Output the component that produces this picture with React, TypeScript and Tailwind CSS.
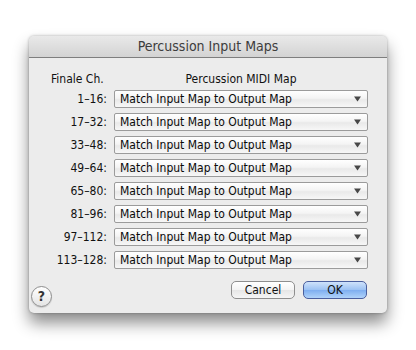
import React from 'react';

const ranges = ['1–16:', '17–32:', '33–48:', '49–64:', '65–80:', '81–96:', '97–112:', '113–128:'];

function PopUp() {
  return (
    <div className="relative flex h-[18px] items-center rounded-[2px] border border-[#9b9b9b] bg-[linear-gradient(#ffffff,#f4f4f4_45%,#e9e9e9_55%,#f7f7f7)] pl-[5px] text-[12px] text-[#0a0a0a]">
      <span>Match Input Map to Output Map</span>
      <svg className="absolute right-[6px] top-[5px]" width="7" height="6" viewBox="0 0 7 6">
        <path d="M0 0.5 H7 L3.5 5.5 Z" fill="#474747" />
      </svg>
    </div>
  );
}

export default function App() {
  return (
    <div
      className="h-[350px] w-[416px] bg-white pl-[29px] pt-[36px]"
      style={{ fontFamily: '"Lucida Grande", "DejaVu Sans Condensed", "DejaVu Sans", sans-serif' }}
    >
      <div className="flex h-[277px] w-[358px] flex-col overflow-hidden rounded-[5px] bg-[#ececec] shadow-[0_10px_16px_rgba(0,0,0,0.45),0_0_3px_rgba(0,0,0,0.3)]">
        <div className="flex h-[22px] items-center justify-center border-b border-[#7e7e7e] bg-[linear-gradient(#e9e9e9,#d3d3d3)] text-[14px] text-[#3d3d3d]">
          Percussion Input Maps
        </div>

        <div className="flex flex-1 flex-col pt-[12px]">
          <div className="grid grid-cols-[85px_254px] items-center text-[12px] text-[#111]">
            <div className="pl-[22px]">Finale Ch.</div>
            <div className="text-center">Percussion MIDI Map</div>
          </div>

          <div className="mt-[2px] grid grid-cols-[78px_254px] gap-x-[7px] gap-y-[5px]">
            {ranges.map((r) => (
              <React.Fragment key={r}>
                <div className="flex items-center justify-end text-[12px] text-[#111]">{r}</div>
                <PopUp />
              </React.Fragment>
            ))}
          </div>

          <div className="mt-auto flex items-end pb-[6px] pl-[2px] pr-[20px]">
            <div className="flex h-[21px] w-[21px] items-center justify-center rounded-full border border-[#8d8d8d] bg-[linear-gradient(#ffffff,#e4e4e4)] text-[14px] font-bold text-[#333] shadow-[0_1px_1px_rgba(0,0,0,0.15)]">
              ?
            </div>
            <div className="mb-[8px] ml-auto flex gap-[8px]">
              <button className="h-[18px] w-[64px] rounded-[5px] border border-[#8e8e8e] bg-[linear-gradient(#ffffff,#f3f3f3_50%,#e6e6e6_51%,#f5f5f5)] text-[12px] leading-none text-[#111]">
                Cancel
              </button>
              <button className="h-[18px] w-[64px] rounded-[5px] border border-[#4a5f9e] bg-[linear-gradient(#cfe2fb,#9bc1f3_50%,#7eaef0_51%,#b0d3fa)] text-[12px] leading-none text-[#111]">
                OK
              </button>
            </div>
          </div>
        </div>
      </div>
    </div>
  );
}
